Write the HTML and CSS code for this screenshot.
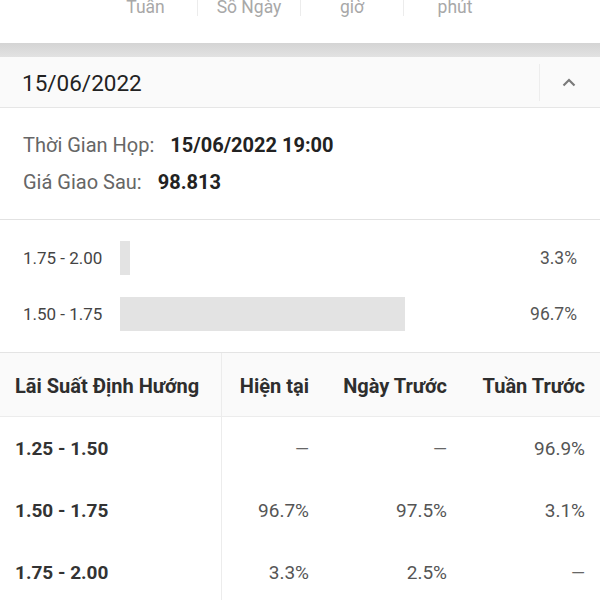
FILE: index.html
```html
<!DOCTYPE html>
<html lang="vi">
<head>
<meta charset="utf-8">
<link rel="stylesheet" href="styles.css">
</head>
<body>
<div class="tabs">
  <div class="tab">Tuần</div>
  <div class="tab">Số Ngày</div>
  <div class="tab">giờ</div>
  <div class="tab">phút</div>
</div>
<div class="band"></div>
<div class="date-header">
  <div class="date">15/06/2022</div>
  <div class="toggle">
    <svg width="14" height="9" viewBox="0 0 14 9"><polyline points="1.5,7.5 7,2 12.5,7.5" fill="none" stroke="#7a7a7a" stroke-width="2.2"/></svg>
  </div>
</div>
<div class="info">
  <div class="info-row"><span class="info-label">Thời Gian Họp:</span><span class="info-value">15/06/2022 19:00</span></div>
  <div class="info-row"><span class="info-label">Giá Giao Sau:</span><span class="info-value">98.813</span></div>
</div>
<div class="bars">
  <div class="bar-row">
    <div class="bar-label">1.75 - 2.00</div>
    <div class="bar-track"><div class="bar-fill" style="width:3.3%"></div></div>
    <div class="bar-pct">3.3%</div>
  </div>
  <div class="bar-row">
    <div class="bar-label">1.50 - 1.75</div>
    <div class="bar-track"><div class="bar-fill" style="width:96.7%"></div></div>
    <div class="bar-pct">96.7%</div>
  </div>
</div>
<div class="table">
  <div class="trow thead">
    <div class="cell first">Lãi Suất Định Hướng</div>
    <div class="cell num">Hiện tại</div>
    <div class="cell num">Ngày Trước</div>
    <div class="cell num">Tuần Trước</div>
  </div>
  <div class="trow">
    <div class="cell first">1.25 - 1.50</div>
    <div class="cell num val"><span class="dash">—</span></div>
    <div class="cell num val"><span class="dash">—</span></div>
    <div class="cell num val">96.9%</div>
  </div>
  <div class="trow">
    <div class="cell first">1.50 - 1.75</div>
    <div class="cell num val">96.7%</div>
    <div class="cell num val">97.5%</div>
    <div class="cell num val">3.1%</div>
  </div>
  <div class="trow">
    <div class="cell first">1.75 - 2.00</div>
    <div class="cell num val">3.3%</div>
    <div class="cell num val">2.5%</div>
    <div class="cell num val"><span class="dash">—</span></div>
  </div>
</div>
</body>
</html>
```
FILE: styles.css
```css
* { box-sizing: border-box; }
html, body { margin: 0; padding: 0; background: #fff; }
body {
  font-family: Roboto, "Noto Sans", "Liberation Sans", sans-serif;
  color: #222;
  width: 600px;
  overflow: hidden;
}
.tabs {
  height: 43px;
  display: flex;
  justify-content: center;
}
.tab {
  width: 103px;
  height: 16px;
  line-height: 14px;
  font-size: 17.5px;
  color: #a8a8a8;
  text-align: center;
}
.tab + .tab { border-left: 1px solid #ececec; }
.band {
  height: 14px;
  background: linear-gradient(#d4d4d4, #e2e2e2);
}
.date-header {
  height: 51px;
  background: #fafafa;
  border-bottom: 1px solid #e6e6e6;
  display: flex;
  align-items: center;
}
.date {
  flex: 1;
  padding-left: 22px;
  padding-top: 2px;
  font-size: 22.5px;
  color: #222;
}
.toggle {
  width: 61px;
  height: 37px;
  border-left: 1px solid #ededed;
  display: flex;
  align-items: center;
  justify-content: center;
  padding-right: 3px;
}
.info {
  padding: 19px 0 18px 23px;
  border-bottom: 1px solid #e2e2e2;
}
.info-row {
  height: 37px;
  line-height: 37px;
  font-size: 20px;
}
.info-label { color: #666; margin-right: 16px; }
.info-value { color: #222; font-weight: 700; }
.bars {
  padding: 21px 0 21px;
  display: flex;
  flex-direction: column;
  gap: 22px;
}
.bar-row {
  display: grid;
  grid-template-columns: 120px 295px 1fr;
  height: 34px;
  align-items: center;
}
.bar-label {
  padding-left: 23px;
  font-size: 17px;
  color: #444;
}
.bar-track { height: 34px; }
.bar-fill { height: 100%; background: #e3e3e3; }
.bar-pct {
  text-align: right;
  padding-right: 23px;
  font-size: 17.5px;
  color: #555;
}
.table { border-top: 1px solid #e4e4e4; }
.trow {
  display: grid;
  grid-template-columns: 222px 102px 138px 138px;
  height: 62px;
  align-items: stretch;
}
.thead {
  height: 64px;
  background: #fafafa;
  border-bottom: 1px solid #ececec;
}
.cell {
  display: flex;
  align-items: center;
  padding-right: 15px;
  font-size: 19px;
}
.cell.first {
  padding-left: 15px;
  border-right: 1px solid #ececec;
  font-weight: 700;
  color: #333;
}
.thead .cell {
  font-weight: 700;
  font-size: 20px;
  color: #2e2e2e;
  padding-top: 2px;
}
.cell.num { justify-content: flex-end; }
.cell.val { color: #555; }
.dash { font-size: 18px; color: #666; }
```
